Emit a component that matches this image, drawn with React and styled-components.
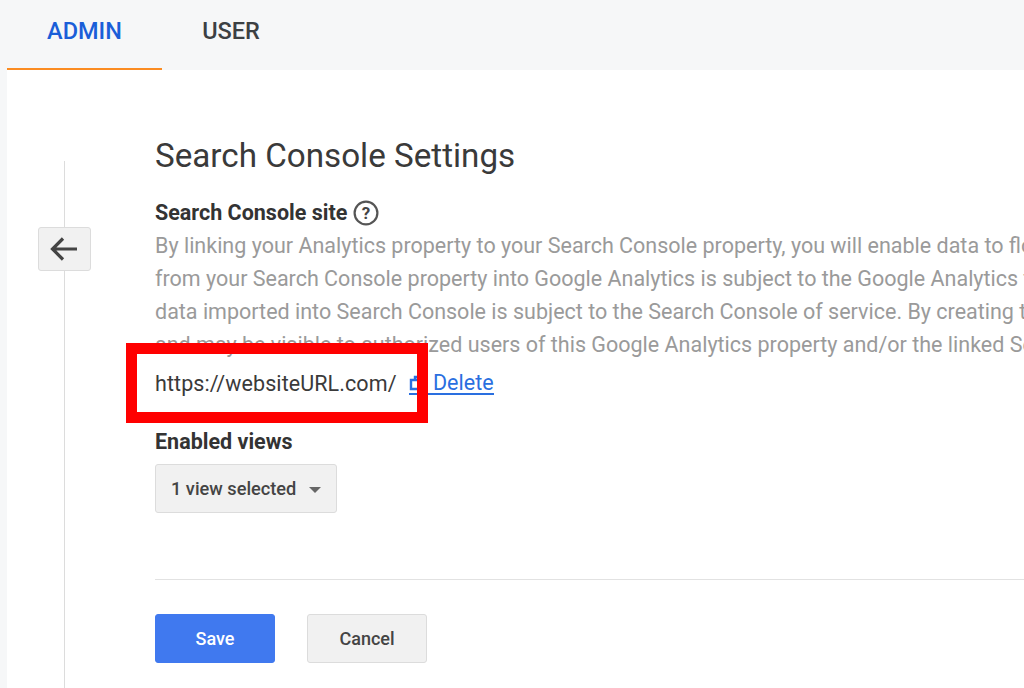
import React from 'react';
import styled, { createGlobalStyle } from 'styled-components';

const GlobalStyle = createGlobalStyle`
  html, body {
    margin: 0;
    padding: 0;
    background: #f6f7f8;
    overflow: hidden;
  }
  body {
    font-family: Roboto, "Liberation Sans", sans-serif;
  }
`;

const Page = styled.div`
  width: 1024px;
  height: 688px;
  overflow: hidden;
  display: flex;
  flex-direction: column;
`;

const TabBar = styled.div`
  height: 70px;
  flex: none;
  display: flex;
  padding-left: 7px;
`;

const Tab = styled.div`
  width: ${p => p.$width}px;
  height: 70px;
  box-sizing: border-box;
  display: flex;
  align-items: center;
  justify-content: center;
  padding-bottom: 6px;
  font-size: 23.5px;
  font-weight: 500;
  color: ${p => (p.$active ? '#1a5ed8' : '#3c4043')};
  border-bottom: 2px solid ${p => (p.$active ? '#fb8c22' : 'transparent')};
`;

const Content = styled.div`
  flex: 1;
  margin-left: 7px;
  background: #fff;
  display: flex;
  position: relative;
  min-height: 0;
`;

const Rail = styled.div`
  width: 148px;
  flex: none;
  padding-top: 91px;
  display: flex;
  flex-direction: column;
  align-items: center;
  box-sizing: border-box;
  padding-right: 34px;
`;

const RailLine = styled.div`
  width: 1px;
  background: #dcdcdc;
  height: ${p => (p.$grow ? 'auto' : '66px')};
  flex: ${p => (p.$grow ? 1 : 'none')};
`;

const BackButton = styled.div`
  width: 53px;
  height: 44px;
  flex: none;
  box-sizing: border-box;
  background: #f1f1f1;
  border: 1px solid #dcdcdc;
  border-radius: 3px;
  display: flex;
  align-items: center;
  justify-content: center;
  color: #444;
`;

const Main = styled.div`
  flex: 1;
  min-width: 0;
  overflow: hidden;
  padding-top: 63px;
`;

const Title = styled.h1`
  margin: 0;
  font-size: 33.2px;
  line-height: 46px;
  font-weight: 400;
  color: #3a3a3a;
`;

const FieldLabel = styled.div`
  font-size: 21.5px;
  line-height: 28px;
  font-weight: 700;
  color: #333;
  display: flex;
  align-items: center;
  gap: 6px;
`;

const Description = styled.div`
  font-size: 21.5px;
  line-height: 33px;
  color: #9a9a9a;
  white-space: nowrap;
`;

const DescriptionBlock = styled.div`
  padding-top: 2px;
`;

const SiteRow = styled.div`
  display: flex;
  align-items: center;
  height: 33px;
  margin-top: 6px;
  font-size: 21.5px;
  color: #3a3a3a;
`;

const SiteUrl = styled.span`
  width: 254px;
  flex: none;
  letter-spacing: 0.08px;
`;

const DeleteLink = styled.a`
  display: flex;
  align-items: center;
  color: #2a6fe0;
  border-bottom: 2px solid #2a6fe0;
  line-height: 20px;
  font-size: 21.5px;
`;

const DeleteIcon = styled.svg`
  margin-right: 8px;
`;

const Dropdown = styled.div`
  width: 182px;
  height: 49px;
  box-sizing: border-box;
  margin-top: 8px;
  padding-left: 15px;
  background: #f1f1f1;
  border: 1px solid #dcdcdc;
  border-radius: 3px;
  display: flex;
  align-items: center;
  gap: 13px;
  font-size: 18.2px;
  font-weight: 500;
  color: #444;
`;

const Caret = styled.span`
  width: 0;
  height: 0;
  border-left: 6px solid transparent;
  border-right: 6px solid transparent;
  border-top: 6px solid #666;
  margin-top: 2px;
`;

const Divider = styled.div`
  height: 1px;
  background: #e2e2e2;
  margin-top: 66px;
`;

const Actions = styled.div`
  display: flex;
  gap: 32px;
  margin-top: 34px;
`;

const Button = styled.div`
  width: 120px;
  height: 49px;
  box-sizing: border-box;
  border-radius: 3px;
  padding-bottom: 1px;
  display: flex;
  align-items: center;
  justify-content: center;
  font-size: 18px;
  font-weight: 500;
  background: ${p => (p.$primary ? '#4079ef' : '#f1f1f1')};
  color: ${p => (p.$primary ? '#fff' : '#444')};
  border: 1px solid ${p => (p.$primary ? '#4079ef' : '#dcdcdc')};
`;

const Highlight = styled.div`
  position: absolute;
  left: 119px;
  top: 273px;
  width: 302px;
  height: 80px;
  box-sizing: border-box;
  border: 11px solid #ff0000;
`;

const LabelGap = styled.div`
  height: ${p => p.$size}px;
`;

function HelpIcon() {
  return (
    <svg width="26" height="26" viewBox="0 0 26 26">
      <circle cx="13" cy="13" r="11.4" fill="none" stroke="#555" strokeWidth="2.2" />
      <text x="13" y="19" textAnchor="middle" fontSize="17" fontWeight="700" fontFamily="Roboto, sans-serif" fill="#444">?</text>
    </svg>
  );
}

function App() {
  return (
    <Page>
      <GlobalStyle />
      <TabBar>
        <Tab $width={155} $active>ADMIN</Tab>
        <Tab $width={138}>USER</Tab>
      </TabBar>
      <Content>
        <Rail>
          <RailLine />
          <BackButton>
            <svg width="30" height="26" viewBox="0 0 30 26" fill="none" stroke="#444" strokeWidth="3.2">
              <path d="M28 13H4M14 2.5 3.5 13 14 23.5" />
            </svg>
          </BackButton>
          <RailLine $grow />
        </Rail>
        <Main>
          <Title>Search Console Settings</Title>
          <LabelGap $size={20} />
          <FieldLabel>Search Console site <HelpIcon /></FieldLabel>
          <DescriptionBlock>
            <Description>By linking your Analytics property to your Search Console property, you will enable data to flow</Description>
            <Description>from your Search Console property into Google Analytics is subject to the Google Analytics terms</Description>
            <Description>data imported into Search Console is subject to the Search Console of service. By creating this</Description>
            <Description>and may be visible to authorized users of this Google Analytics property and/or the linked Search</Description>
          </DescriptionBlock>
          <SiteRow>
            <SiteUrl>https://websiteURL.com/</SiteUrl>
            <DeleteLink>
              <DeleteIcon width="16" height="16" viewBox="0 0 16 16" fill="none" stroke="#2a6fe0" strokeWidth="2.4">
                <path d="M2 5h10v9H2zM6 5V2h4v3" />
              </DeleteIcon>
              Delete
            </DeleteLink>
          </SiteRow>
          <LabelGap $size={28} />
          <FieldLabel>Enabled views</FieldLabel>
          <Dropdown>
            1 view selected
            <Caret />
          </Dropdown>
          <Divider />
          <Actions>
            <Button $primary>Save</Button>
            <Button>Cancel</Button>
          </Actions>
        </Main>
        <Highlight />
      </Content>
    </Page>
  );
}

export default App;
